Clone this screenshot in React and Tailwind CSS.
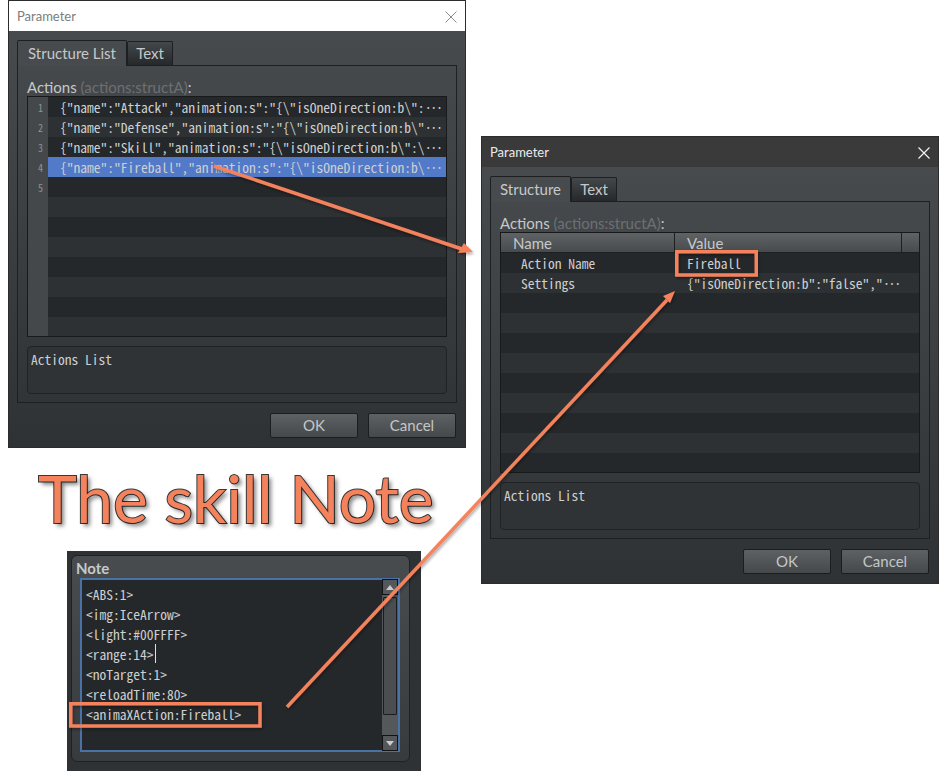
const UI = { fontFamily: 'Lato, "Noto Sans", sans-serif' };
const MONO = '[font-family:"Noto_Sans_Mono_CJK_JP","Liberation_Mono",monospace]';

function Btn({ children }) {
  return (
    <div className="flex h-[25px] w-[88px] items-center justify-center rounded-[2px] border border-[#1b1d1f] bg-gradient-to-b from-[#5d6163] to-[#45494c] text-[15px] text-[#c4c6c7]">
      {children}
    </div>
  );
}

function Tabs({ first, firstW }) {
  return (
    <div className="flex h-[25px] shrink-0">
      <div style={{ width: firstW }} className="-mb-px z-10 flex h-[26px] items-center justify-center rounded-t-[2px] border border-b-0 border-[#1d1f21] bg-[#474b4e] text-[15px] text-[#c6c8c9]">
        {first}
      </div>
      <div className="mt-px flex w-[46px] items-center justify-center rounded-t-[2px] border border-b-0 border-[#1d1f21] bg-gradient-to-b from-[#44484b] to-[#26292b] text-[15px] text-[#c6c8c9]">
        Text
      </div>
    </div>
  );
}

function Label() {
  return (
    <div className="flex h-[30px] shrink-0 items-end text-[15px] leading-[18px] text-[#c6c8c9]">
      <span>Actions&nbsp;</span>
      <span className="text-[#6d7072]">(actions:structA)</span>
      <span>:</span>
    </div>
  );
}

function Desc() {
  return (
    <div className={`mt-[9px] h-[48px] shrink-0 rounded-[4px] border border-[#202325] bg-[#303336] px-[3px] pt-[2px] text-[13.5px] leading-[20px] text-[#cdd0d1] ${MONO}`}>
      Actions List
    </div>
  );
}

function Dots() {
  return <span className="tracking-[-2px]">···</span>;
}

function Window({ className, title, children }) {
  return (
    <div style={UI} className={`absolute flex h-[448px] w-[458px] flex-col border border-[#2a2c2e] ${className}`}>
      {title}
      <div className="flex flex-1 flex-col bg-gradient-to-b from-[#474b4e] to-[#2f3234] px-[8px] pt-[9px]">
        {children}
        <div className="mr-px mt-[10px] flex justify-end gap-[10px]">
          <Btn>OK</Btn>
          <Btn>Cancel</Btn>
        </div>
      </div>
    </div>
  );
}

function Pane({ children }) {
  return (
    <div className="flex h-[338px] shrink-0 flex-col border border-[#1d1f21] px-[9px] pb-[9px]">{children}</div>
  );
}

const rows = [
  '{"name":"Attack","animation:s":"{\\"isOneDirection:b\\":',
  '{"name":"Defense","animation:s":"{\\"isOneDirection:b\\"',
  '{"name":"Skill","animation:s":"{\\"isOneDirection:b\\":\\',
  '{"name":"Fireball","animation:s":"{\\"isOneDirection:b\\',
  '', '', '', '', '', '', '', '',
];

function Note() {
  const lines = ['<ABS:1>', '<img:IceArrow>', '<light:#00FFFF>', '<range:14>', '<noTarget:1>', '<reloadTime:80>', '<animaXAction:Fireball>'];
  return (
    <div style={UI} className="absolute left-[67px] top-[551px] h-[220px] w-[354px] bg-[#2f3234] pl-[4px] pr-[11px] pt-[4px]">
      <div className="flex h-[207px] flex-col rounded-[6px] border border-[#1f2123] bg-gradient-to-b from-[#484c4f] to-[#383b3e] px-[8px]">
        <div className="-ml-[4px] flex h-[21px] shrink-0 items-end text-[15px] font-bold leading-[18px] text-[#c6c8c9]">Note</div>
        <div className="mt-[1px] flex h-[174px] w-[320px] border-2 border-[#4b72a6] bg-[#25282a]">
          <div className={`flex-1 pl-[4px] pt-[4px] text-[13.5px] leading-[20px] text-[#cdd0d1] ${MONO}`}>
            {lines.map((l, i) => (
              <div key={l} className="h-[20px] whitespace-pre">
                {l}
                {i === 3 && <span className="ml-px inline-block h-[19px] w-px bg-[#e0e0e0] align-top" />}
              </div>
            ))}
          </div>
          <div className="flex w-[16px] shrink-0 flex-col bg-[#54585b]">
            <div className="-mt-px flex h-[16px] shrink-0 items-center justify-center border border-[#111314] bg-[#54585b]">
              <svg width="8" height="5" viewBox="0 0 8 5"><path d="M4 0 8 5H0z" fill="#c9cbcc" /></svg>
            </div>
            <div className="mx-[1px] mt-[2px] h-[118px] rounded-[1px] border border-[#1a1c1d] bg-[#4a4e51]" />
            <div className="flex-1" />
            <div className="-mb-px flex h-[16px] shrink-0 items-center justify-center border border-[#111314] bg-[#54585b]">
              <svg width="8" height="5" viewBox="0 0 8 5"><path d="M0 0H8L4 5z" fill="#c9cbcc" /></svg>
            </div>
          </div>
        </div>
      </div>
    </div>
  );
}

export default function App() {
  const orange = '#f4825c';
  return (
    <div className="relative h-[771px] w-[939px] overflow-hidden bg-white">
      <Window
        className="left-[8px] top-0"
        title={
          <div className="flex h-[30px] shrink-0 items-center justify-between bg-white pl-[8px] pr-[8px] pt-px text-[13px] text-[#7c7c7c]">
            <span>Parameter</span>
            <svg width="12" height="12" viewBox="0 0 12 12" stroke="#8a8a8a" strokeWidth="1"><path d="M.5.5l11 11M11.5.5l-11 11" /></svg>
          </div>
        }
      >
        <Tabs first="Structure List" firstW={110} />
        <Pane>
          <Label />
          <div className="flex h-[241px] shrink-0 overflow-hidden border border-[#17191a]">
            <div className={`flex w-[20px] shrink-0 flex-col items-end bg-[#44484b] pr-[5px] text-[10px] text-[#8f9395] ${MONO}`}>
              {[1, 2, 3, 4, 5].map((n) => (
                <div key={n} className="flex h-[20px] items-center">{n}</div>
              ))}
            </div>
            <div className="flex-1">
              {rows.map((r, i) => (
                <div
                  key={i}
                  className={`h-[20px] whitespace-pre pl-[12px] text-[13.5px] leading-[20px] text-[#cdd0d1] ${MONO} ${
                    i === 3 ? 'bg-[#5379c9]' : i % 2 === 0 ? 'bg-[#25282a]' : 'bg-[#2d3133]'
                  }`}
                >
                  {r}
                  {r && <Dots />}
                </div>
              ))}
            </div>
          </div>
          <Desc />
        </Pane>
      </Window>

      <Window
        className="left-[481px] top-[136px]"
        title={
          <div className="flex h-[30px] shrink-0 items-center justify-between bg-[#3a3a3a] pl-[8px] pr-[8px] pt-px text-[13px] text-[#ececec]">
            <span>Parameter</span>
            <svg width="12" height="12" viewBox="0 0 12 12" stroke="#f2f2f2" strokeWidth="1.2"><path d="M.5.5l11 11M11.5.5l-11 11" /></svg>
          </div>
        }
      >
        <Tabs first="Structure" firstW={81} />
        <Pane>
          <Label />
          <div className="h-[241px] shrink-0 overflow-hidden border border-[#17191a]">
            <div className="flex h-[20px] border-b border-[#1d1f21] bg-gradient-to-b from-[#5f6366] to-[#474b4e] text-[15px] leading-[20px] text-[#c6c8c9]">
              <div className="w-[174px] border-r border-[#1d1f21] pl-[12px]">Name</div>
              <div className="w-[227px] border-r border-[#1d1f21] pl-[12px]">Value</div>
            </div>
            {Array.from({ length: 11 }).map((_, i) => (
              <div key={i} className={`flex h-[20px] whitespace-pre text-[13.5px] leading-[20px] text-[#cdd0d1] ${MONO} ${i % 2 === 0 ? 'bg-[#25282a]' : 'bg-[#2d3133]'}`}>
                <div className="w-[174px] pl-[20px]">{i === 0 ? 'Action Name' : i === 1 ? 'Settings' : ''}</div>
                <div className="pl-[12px]">
                  {i === 0 && 'Fireball'}
                  {i === 1 && <>{'{"isOneDirection:b":"false","'}<Dots /></>}
                </div>
              </div>
            ))}
          </div>
          <Desc />
        </Pane>
      </Window>

      <div
        className="absolute left-[38px] top-[458px] whitespace-nowrap text-[66px] leading-[80px] tracking-[-0.15px] text-[#f4825c] [paint-order:stroke_fill] [-webkit-text-stroke:2px_#3a3a3a] [text-shadow:3px_3px_4px_rgba(0,0,0,0.5)]"
        style={{ fontFamily: 'Lato, sans-serif' }}
      >
        The skill Note
      </div>

      <Note />

      <svg className="pointer-events-none absolute left-0 top-0" width="939" height="771" viewBox="0 0 939 771" fill="none">
        <defs>
          <filter id="s" x="-10%" y="-10%" width="120%" height="120%">
            <feDropShadow dx="1" dy="2" stdDeviation="1.5" floodColor="#000" floodOpacity="0.35" />
          </filter>
        </defs>
        <g filter="url(#s)">
          <path d="M214 166 462 249" stroke={orange} strokeWidth="3.5" />
          <path d="M473 252 464 243 458 253z" fill={orange} />
          <path d="M287 707 667 300" stroke={orange} strokeWidth="3.5" />
          <path d="M675 291 663 296 670 303z" fill={orange} />
          <rect x="676.75" y="251.75" width="79.5" height="23.25" stroke={orange} strokeWidth="3.5" />
          <rect x="70.75" y="703.75" width="189.25" height="22.25" stroke={orange} strokeWidth="3.5" />
        </g>
      </svg>
    </div>
  );
}
